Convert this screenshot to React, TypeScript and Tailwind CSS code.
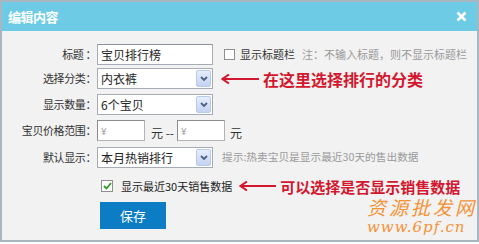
import React from 'react';

const font = { fontFamily: '"Noto Sans CJK SC", "Noto Sans", sans-serif' };

const SelectBox: React.FC<{ value: string }> = ({ value }) => (
  <div className="flex items-center justify-between w-[116px] h-[21px] bg-white border border-[#a5acb5] pl-[3px] pr-[1px]">
    <span className="text-[12px] text-[#222] leading-none">{value}</span>
    <div className="w-[15px] h-[17px] flex items-center justify-center rounded-[2px] border border-[#b8cbe8] bg-gradient-to-b from-[#e6eefc] to-[#c3d3f0]">
      <svg width="8" height="6" viewBox="0 0 8 6">
        <path d="M1 1 L4 4 L7 1" stroke="#4d6185" strokeWidth="1.8" fill="none" />
      </svg>
    </div>
  </div>
);

const Arrow: React.FC<{ width: number }> = ({ width }) => (
  <svg width={width} height="10" viewBox={`0 0 ${width} 10`}>
    <path d={`M2 5 L${width} 5`} stroke="#d3172f" strokeWidth="2" />
    <path d="M8 0.5 L1.5 5 L8 9.5" stroke="#d3172f" strokeWidth="2" fill="none" />
  </svg>
);

const Label: React.FC<{ children: React.ReactNode }> = ({ children }) => (
  <div className="w-[97px] text-right text-[11px] tracking-[-0.4px] text-[#333] shrink-0 pr-[1px]">{children}</div>
);

export default function App() {
  return (
    <div className="w-[479px] h-[244px] bg-white relative overflow-hidden" style={font}>
      <div className="w-[479px] h-[242px] border-2 border-[#a8b6c1] bg-[#f2f2f2] flex flex-col">
        <div className="h-[29px] bg-[#6dcbe5] flex items-center justify-between pl-[6px] pr-[10px] shrink-0">
          <span className="text-white text-[13px] font-bold tracking-[-0.5px]">编辑内容</span>
          <svg width="11" height="11" viewBox="0 0 11 11">
            <path d="M1.5 1.5 L9.5 9.5 M9.5 1.5 L1.5 9.5" stroke="#ffffff" strokeWidth="2.6" />
          </svg>
        </div>

        <div className="flex flex-col -ml-[2px]">
          {/* 标题 */}
          <div className="flex items-center h-[21px] mt-[13px]">
            <Label>标题 ：</Label>
            <div className="w-[116px] h-[21px] bg-white border border-[#a5acb5] border-t-[#8d949c] flex items-center pl-[3px] text-[12px] text-[#222]">
              宝贝排行榜
            </div>
            <div className="w-[11px] h-[11px] border border-[#8e8f8f] bg-white ml-[11px]" />
            <span className="ml-[5px] text-[11px] text-[#333]">显示标题栏</span>
            <span className="ml-[7px] text-[11px] text-[#999]">注：不输入标题，则不显示标题栏</span>
          </div>

          {/* 选择分类 */}
          <div className="flex items-center h-[21px] mt-[3px]">
            <Label>选择分类：</Label>
            <SelectBox value="内衣裤" />
            <div className="ml-[8px] flex items-center">
              <Arrow width={38} />
            </div>
            <span className="ml-[4px] text-[16px] font-bold text-[#d3172f] leading-none">在这里选择排行的分类</span>
          </div>

          {/* 显示数量 */}
          <div className="flex items-center h-[21px] mt-[5px]">
            <Label>显示数量：</Label>
            <SelectBox value="6个宝贝" />
          </div>

          {/* 价格范围 */}
          <div className="flex items-center h-[21px] mt-[5px]">
            <Label>宝贝价格范围：</Label>
            <div className="w-[48px] h-[21px] bg-white border border-[#b3b3b3] border-t-[#8d8d8d] border-l-[#8d8d8d] flex items-center pl-[3px] text-[10px] text-[#a0a0a0]">
              ¥
            </div>
            <span className="ml-[6px] mt-[4px] text-[12px] text-[#333]">元 --</span>
            <div className="ml-[3px] w-[48px] h-[21px] bg-white border border-[#b3b3b3] border-t-[#8d8d8d] border-l-[#8d8d8d] flex items-center pl-[3px] text-[10px] text-[#a0a0a0]">
              ¥
            </div>
            <span className="ml-[5px] mt-[4px] text-[12px] text-[#333]">元</span>
          </div>

          {/* 默认显示 */}
          <div className="flex items-center h-[21px] mt-[6px]">
            <Label>默认显示：</Label>
            <SelectBox value="本月热销排行" />
            <span className="ml-[9px] text-[10.7px] text-[#999]">提示:热卖宝贝是显示最近30天的售出数据</span>
          </div>

          {/* 销售数据 */}
          <div className="flex items-center h-[22px] mt-[7px] pl-[101px]">
            <div className="w-[12px] h-[12px] border border-[#8e8f8f] bg-white flex items-center justify-center">
              <svg width="9" height="8" viewBox="0 0 9 8">
                <path d="M1 4 L3.5 6.5 L8 1" stroke="#2f9a2a" strokeWidth="1.8" fill="none" />
              </svg>
            </div>
            <span className="ml-[8px] text-[11px] text-[#222]">显示最近30天销售数据</span>
            <div className="ml-[7px] flex items-center">
              <Arrow width={37} />
            </div>
            <span className="ml-[4px] text-[15px] font-bold text-[#d3172f] leading-none">可以选择是否显示销售数据</span>
          </div>

          {/* 保存 */}
          <div className="pl-[100px] mt-[5px]">
            <button className="w-[66px] h-[27px] bg-[#0c7dc5] text-white text-[13px]">保存</button>
          </div>
        </div>
      </div>

      {/* watermark */}
      <div className="absolute left-[367px] top-[197px] text-[#f5891f] opacity-90 italic leading-none">
        <div className="text-[19px] tracking-[3px]">资源批发网</div>
        <div className="text-[15px] tracking-[1px] mt-[4px]" style={{ fontFamily: '"DejaVu Serif", serif' }}>
          www.6pf.cn
        </div>
      </div>
    </div>
  );
}
